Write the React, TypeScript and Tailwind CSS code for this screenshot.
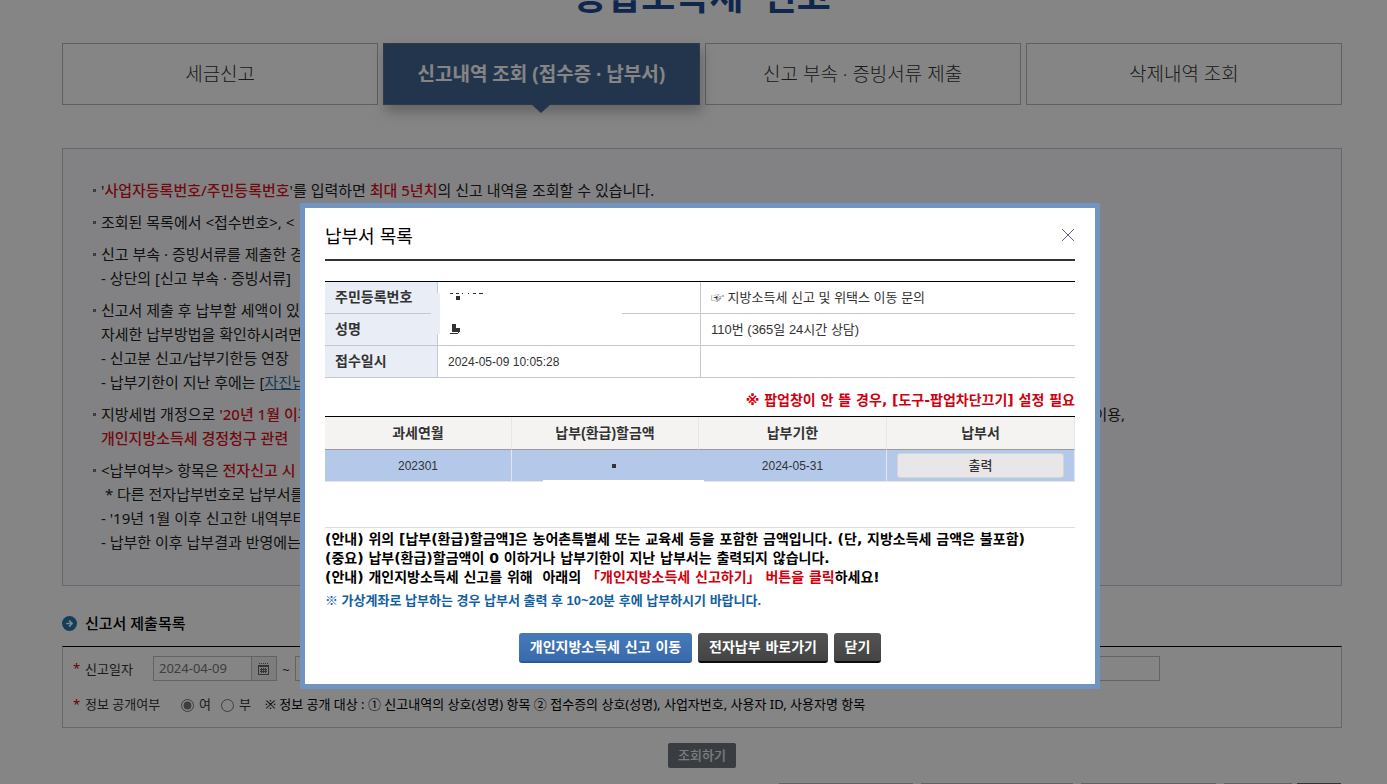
import React from 'react';
import { ArrowRight } from 'lucide-react';

const tabs = [
  { label: '세금신고', active: false },
  { label: '신고내역 조회 (접수증 · 납부서)', active: true },
  { label: '신고 부속 · 증빙서류 제출', active: false },
  { label: '삭제내역 조회', active: false },
];

const columns = ['과세연월', '납부(환급)할금액', '납부기한', '납부서'];

const Red: React.FC<{ children: React.ReactNode }> = ({ children }) => (
  <span className="font-medium text-[#d9151d]">{children}</span>
);

const Notice: React.FC<{ children: React.ReactNode }> = ({ children }) => (
  <li className="flex items-start gap-[5px] whitespace-pre">
    <span className="mt-[11px] size-[3px] shrink-0 bg-[#777]" />
    <div className="grow">{children}</div>
  </li>
);

const CalendarIcon = () => (
  <svg width="12" height="12" viewBox="0 0 12 12" shapeRendering="crispEdges">
    <path d="M1 0h1v1H1zM3 0h1v1H3zM5 0h1v1H5zM7 0h1v1H7zM9 0h1v1H9z" fill="#666" />
    <path d="M0 2h11v10H0zM1 4v7h9V4z" fill="#666" fillRule="evenodd" />
    <path d="M2 6h7v1H2zM2 8h7v1H2zM3 5h1v5H3zM5 5h1v5H5zM7 5h1v5H7z" fill="#666" />
  </svg>
);

const DateField: React.FC<{ label: string; value: string }> = ({ label, value }) => (
  <div className="flex h-[25px] w-[124px]">
    <input
      type="text"
      aria-label={label}
      defaultValue={value}
      className="w-[99px] border border-[#bfbfbf] bg-white px-[5px] text-[13px] text-[#777]"
    />
    <button
      type="button"
      aria-label="달력"
      className="flex w-[25px] items-center justify-center border border-l-0 border-[#bfbfbf] bg-[#efefef]"
    >
      <CalendarIcon />
    </button>
  </div>
);

const SearchForm = () => (
  <form className="border border-t-black border-[#c8c8c8] pt-[9px] text-[13px] text-[#333]">
    <div className="flex h-[25px] items-center pl-[10px] pr-[181px]">
      <span className="w-[12px] text-[#c00]">*</span>
      <span className="w-[68px] pt-[2px]">신고일자</span>
      <DateField label="신고일자 시작" value="2024-04-09" />
      <span className="w-[18px] pt-[4px] text-center">~</span>
      <DateField label="신고일자 종료" value="" />
      <input
        type="text"
        aria-label="검색어"
        className="ml-[480px] h-[25px] min-w-0 grow border border-[#bfbfbf] bg-white px-[5px]"
      />
    </div>
    <div className="mt-[14px] mb-[12px] flex h-[20px] items-center pl-[10px]">
      <span className="w-[12px] text-[#c00]">*</span>
      <span className="w-[96px]">정보 공개여부</span>
      <label className="flex items-center gap-[5px]">
        <input type="radio" name="open" defaultChecked className="size-[13px] accent-[#777]" />여
      </label>
      <label className="ml-[10px] flex items-center gap-[5px]">
        <input type="radio" name="open" className="size-[13px]" />부
      </label>
      <span className="ml-[14px] text-black">
        ※ 정보 공개 대상 : ① 신고내역의 상호(성명) 항목 ② 접수증의 상호(성명), 사업자번호, 사용자 ID, 사용자명 항목
      </span>
    </div>
  </form>
);

const ReportPage = () => (
  <main className="pr-[45px] pl-[62px] font-['Noto_Sans','Noto_Sans_CJK_KR',sans-serif]">
    <div className="flex h-[43px] items-end justify-center overflow-hidden">
      <h1 className="pb-[19px] text-[37px] leading-[56px] font-bold text-[#1d4c93]">종합소득세&nbsp; 신고</h1>
    </div>

    <nav className="grid grid-cols-4 gap-[5px]">
      {tabs.map((tab) => (
        <a
          key={tab.label}
          href="#"
          className={
            tab.active
              ? 'relative flex h-[62px] items-center justify-center border border-[#5c6f8c] bg-[#446795] text-[19px] font-bold text-white shadow-[2px_7px_12px_rgba(0,0,0,0.25)]'
              : 'flex h-[62px] items-center justify-center border border-[#b8b8b8] text-[19px] font-light text-[#333]'
          }
        >
          {tab.label}
          {tab.active && (
            <svg className="absolute top-full left-1/2 -ml-[10px]" width="20" height="9" viewBox="0 0 20 9">
              <path d="M0 0h20L10 9z" fill="#446795" />
            </svg>
          )}
        </a>
      ))}
    </nav>

    <section className="mt-[43px] border border-[#c4c8cd] bg-[#f9fafd] pt-[29px] pr-[30px] pb-[31px] pl-[30px]">
      <ul className="space-y-[8px] text-[15px] leading-[24px] text-[#222]">
        <Notice>
          '<Red>사업자등록번호/주민등록번호</Red>'를 입력하면 <Red>최대 5년치</Red>의 신고 내역을 조회할 수 있습니다.
        </Notice>
        <Notice>조회된 목록에서 &lt;접수번호&gt;, &lt;</Notice>
        <Notice>
          <p>신고 부속 · 증빙서류를 제출한 경우</p>
          <p>- 상단의 [신고 부속 · 증빙서류]</p>
        </Notice>
        <Notice>
          <p>신고서 제출 후 납부할 세액이 있는</p>
          <p>자세한 납부방법을 확인하시려면</p>
          <p>- 신고분 신고/납부기한등 연장</p>
          <p>- 납부기한이 지난 후에는 [<a href="#" className="text-[#1c6f9f] underline">자진납부</a>]</p>
        </Notice>
        <Notice>
          <div className="flex justify-between pr-[186px]">
            <span>지방세법 개정으로 <Red>'20년 1월 이후</Red></span>
            <span>이용,</span>
          </div>
          <p><Red>개인지방소득세 경정청구 관련</Red></p>
        </Notice>
        <Notice>
          <p>&lt;납부여부&gt; 항목은 <Red>전자신고 시</Red></p>
          <p> * 다른 전자납부번호로 납부서를</p>
          <p>- '19년 1월 이후 신고한 내역부터</p>
          <p>- 납부한 이후 납부결과 반영에는</p>
        </Notice>
      </ul>
    </section>

    <div className="mt-[27px] mb-[13px] flex h-[20px] items-center gap-[8px]">
      <span className="flex size-[15px] items-center justify-center rounded-full bg-[#2477ad]">
        <ArrowRight className="size-[9px] text-white" strokeWidth={4} />
      </span>
      <h2 className="text-[15px] font-medium text-black">신고서 제출목록</h2>
    </div>

    <SearchForm />

    <div className="mt-[15px] flex justify-center">
      <button className="h-[25px] rounded-[2px] bg-[#6e757e] px-[10px] text-[13px] font-medium text-[#eee]">
        조회하기
      </button>
    </div>

    <div className="mt-[15px] flex justify-end gap-[8px] pr-[1px]">
      <button aria-label="접수증" className="h-[27px] w-[134px] border border-[#bbb]" />
      <button aria-label="신고서" className="h-[27px] w-[152px] border border-[#bbb]" />
      <button aria-label="납부서" className="h-[27px] w-[135px] border border-[#bbb]" />
      <div className="flex gap-[5px]">
        <button aria-label="엑셀" className="h-[27px] w-[68px] border border-[#bbb]" />
        <button aria-label="삭제" className="h-[27px] w-[44px] border border-[#666] bg-[#777]" />
      </div>
    </div>
  </main>
);

// Masked personal data: the patch spans the first two rows
const MaskedPatch = () => (
  <svg className="absolute top-[11px] -left-[7px]" width="191" height="41" shapeRendering="crispEdges">
    <path d="M0 0h9v41H0z" fill="#e8edf6" />
    <path d="M9 0h182v41H9z" fill="#fff" />
    <path d="M19 0h3v1h-3zM25 0h3v1h-3zM31 0h1v1h-1zM37 0h1v1h-1zM42 0h3v1h-3zM48 0h4v1h-4zM25 3h4v4h-4z" fill="#333" />
    <path d="M21 31h4v4h4v4h-8zM19 40h8v1h-8zM27 39h1v1h-1z" fill="#333" />
  </svg>
);

const PaymentModal = () => (
  <div className="fixed inset-0 flex items-start justify-center overflow-hidden bg-black/48 pt-[203px] pl-[13px]">
    <div
      role="dialog"
      aria-labelledby="pay-title"
      className="w-[800px] border-5 border-[#7294c0] bg-white px-[20px] pb-[21px] font-['Liberation_Sans','Noto_Sans_CJK_KR',sans-serif] text-[13px] text-[#333]"
    >
      <div className="flex h-[53px] items-center justify-between border-b-2 border-[#333] pt-[2px]">
        <h2 id="pay-title" className="pt-[6px] text-[18px] text-black">납부서 목록</h2>
        <button aria-label="닫기">
          <svg width="14" height="14" viewBox="0 0 14 14" stroke="#5a6080" fill="none">
            <path d="M1 1l12 12M13 1L1 13" />
          </svg>
        </button>
      </div>

      <table className="mt-[20px] w-full table-fixed border-separate border-spacing-0 border-t border-black text-left">
        <colgroup>
          <col className="w-[113px]" />
          <col className="w-[263px]" />
          <col />
        </colgroup>
        <tbody>
          <tr className="h-[32px]">
            <th className="border-r border-b border-[#c3cad6] bg-[#e8edf6] pl-[10px] text-[14px] font-bold">주민등록번호</th>
            <td className="relative border-r border-b border-[#c3cad6]"><MaskedPatch /></td>
            <td className="border-b border-[#c3cad6] pl-[10px]">☞ 지방소득세 신고 및 위택스 이동 문의</td>
          </tr>
          <tr className="h-[32px]">
            <th className="border-r border-b border-[#c3cad6] bg-[#e8edf6] pl-[10px] text-[14px] font-bold">성명</th>
            <td className="border-r border-b border-[#c3cad6]" />
            <td className="border-b border-[#c3cad6] pl-[10px]">110번 (365일 24시간 상담)</td>
          </tr>
          <tr className="h-[32px]">
            <th className="border-r border-b border-[#c3cad6] bg-[#e8edf6] pl-[10px] text-[14px] font-bold">접수일시</th>
            <td className="border-r border-b border-[#c3cad6] pl-[10px] text-[12px]">2024-05-09 10:05:28</td>
            <td className="border-b border-[#c3cad6]" />
          </tr>
        </tbody>
      </table>

      <p className="mt-[12px] mb-[6px] text-right font-['DejaVu_Sans','Noto_Sans_CJK_KR',sans-serif] text-[14px] leading-[20px] font-bold text-[#d0000f]">
        ※ 팝업창이 안 뜰 경우, [도구-팝업차단끄기] 설정 필요
      </p>

      <table className="w-full table-fixed border-separate border-spacing-0 border-t border-black text-center">
        <colgroup>
          <col className="w-[187px]" />
          <col className="w-[187px]" />
          <col className="w-[188px]" />
          <col />
        </colgroup>
        <thead>
          <tr className="h-[33px]">
            {columns.map((c) => (
              <th key={c} className="border-r border-b border-r-[#e6e6e6] border-b-[#999] bg-[#f4f3f2] text-[14px] font-bold">{c}</th>
            ))}
          </tr>
        </thead>
        <tbody>
          <tr className="h-[32px] bg-[#b4c8e9] text-[12px]">
            <td className="border-r border-b border-[#e2e6ee]">202301</td>
            <td className="relative border-b border-[#e2e6ee]">
              <svg className="absolute top-0 left-0" width="194" height="33" shapeRendering="crispEdges">
                <path d="M100 14h4v4h-4z" fill="#333" />
                <path d="M31 30h161v2H31z" fill="#fff" />
              </svg>
            </td>
            <td className="border-r border-b border-[#e2e6ee]">2024-05-31</td>
            <td className="border-r border-b border-[#e2e6ee] px-[10px]">
              <button className="block h-[25px] w-full rounded-[3px] border border-[#d5d5d5] bg-[#e8e6e7] text-[13px] font-medium text-[#333]">
                출력
              </button>
            </td>
          </tr>
        </tbody>
      </table>

      <div className="mt-[45px] border-t border-[#ddd] pt-[2px] font-['DejaVu_Sans','Noto_Sans_CJK_KR',sans-serif] text-[14px] leading-[19px] font-bold whitespace-pre text-black">
        <p>(안내) 위의 [납부(환급)할금액]은 농어촌특별세 또는 교육세 등을 포함한 금액입니다. (단, 지방소득세 금액은 불포함)</p>
        <p>(중요) 납부(환급)할금액이 0 이하거나 납부기한이 지난 납부서는 출력되지 않습니다.</p>
        <p>(안내) 개인지방소득세 신고를 위해  아래의 <span className="text-[#d0000f]">「개인지방소득세 신고하기」 버튼을 클릭</span>하세요!</p>
      </div>
      <p className="mt-[4px] text-[13px] leading-[19px] font-bold text-[#1260a0]">
        ※ 가상계좌로 납부하는 경우 납부서 출력 후 10~20분 후에 납부하시기 바랍니다.
      </p>

      <div className="mt-[23px] flex justify-center gap-[6px] font-['DejaVu_Sans','Noto_Sans_CJK_KR',sans-serif] text-[14px] font-bold text-white">
        <button className="h-[30px] w-[173px] rounded-[3px] border-b-2 border-[#2a5796] bg-linear-to-b from-[#4679ba] to-[#3a6bac]">개인지방소득세 신고 이동</button>
        <button className="h-[30px] w-[130px] rounded-[3px] border-b-2 border-[#0c0c0c] bg-linear-to-b from-[#535353] to-[#444]">전자납부 바로가기</button>
        <button className="h-[30px] w-[47px] rounded-[3px] border-b-2 border-[#0c0c0c] bg-linear-to-b from-[#535353] to-[#444]">닫기</button>
      </div>
    </div>
  </div>
);

const App: React.FC = () => (
  <div className="h-screen overflow-hidden bg-white">
    <ReportPage />
    <PaymentModal />
  </div>
);

export default App;
